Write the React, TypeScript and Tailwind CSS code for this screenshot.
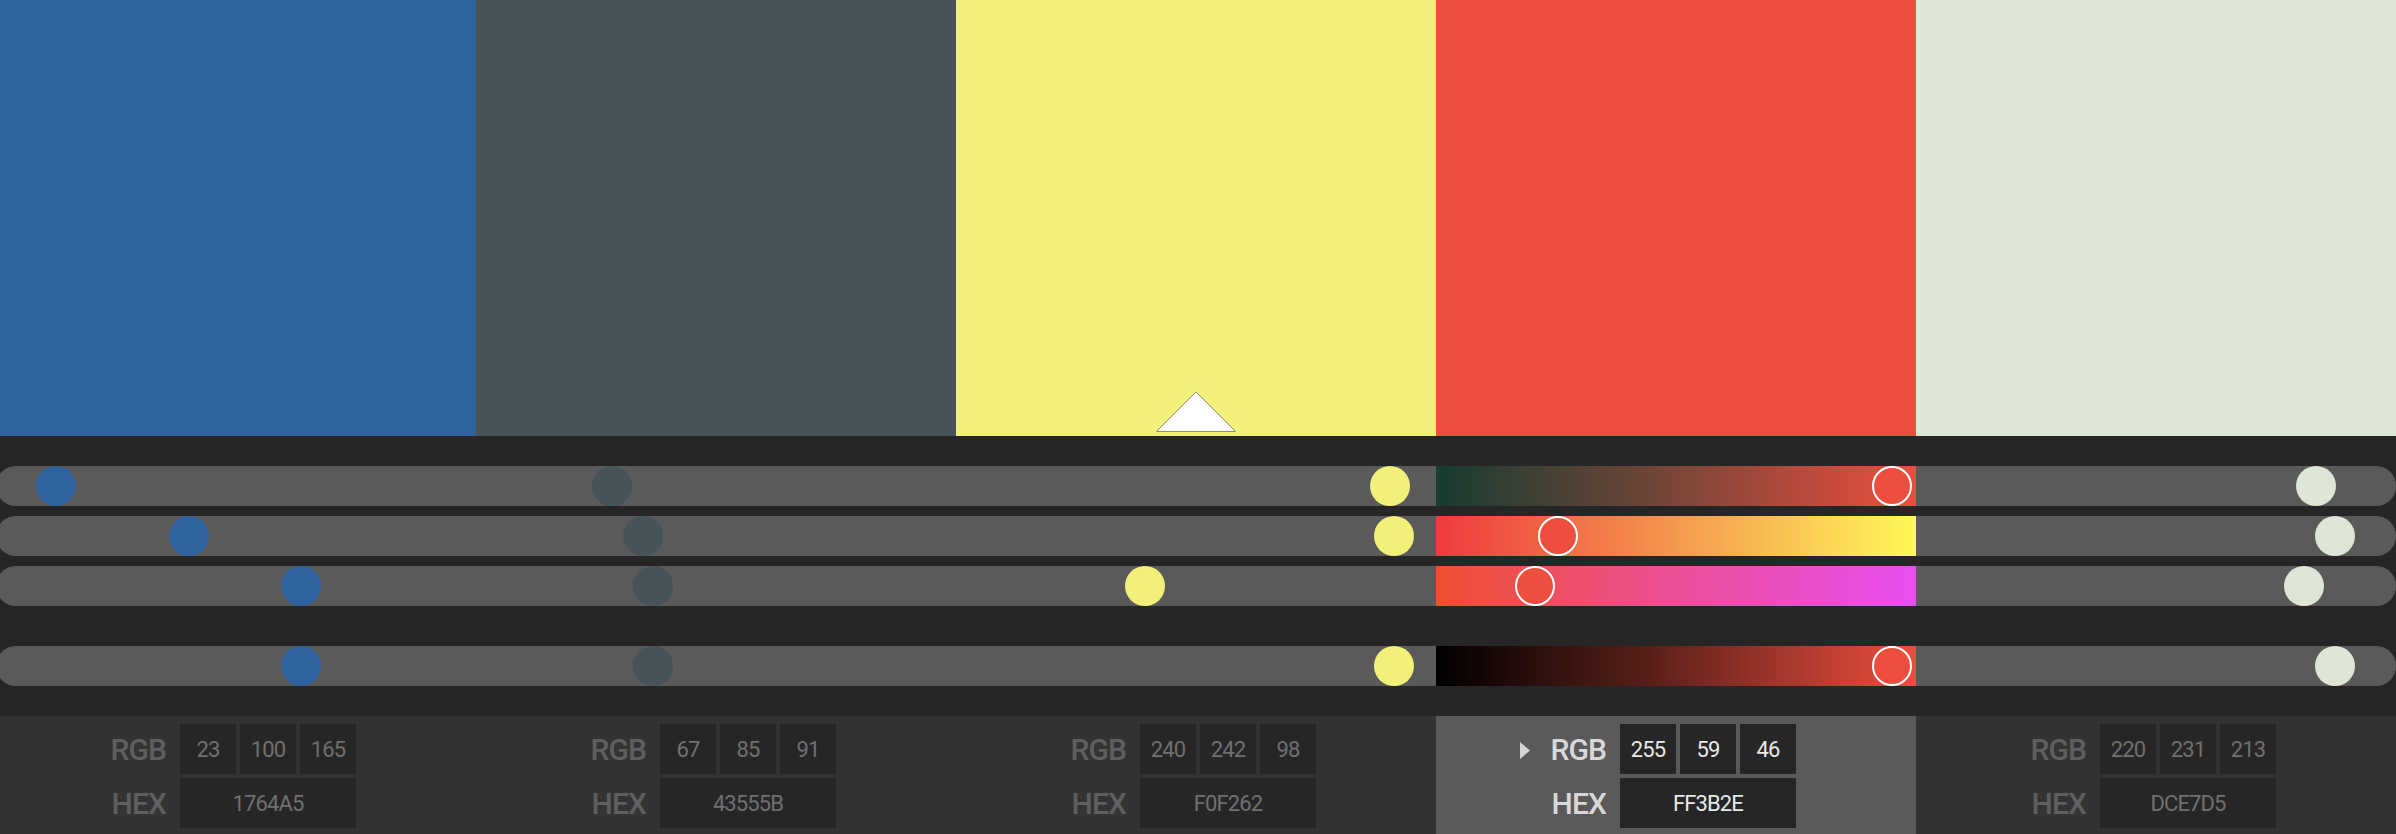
import React from "react";

type Swatch = {
  hex: string;
  rgb: [number, number, number];
  // colour as it shows on screen
  screen: string;
};

const swatches: Swatch[] = [
  { hex: "1764A5", rgb: [23, 100, 165], screen: "#2f63a0" },
  { hex: "43555B", rgb: [67, 85, 91], screen: "#465358" },
  { hex: "F0F262", rgb: [240, 242, 98], screen: "#f1f17a" },
  { hex: "FF3B2E", rgb: [255, 59, 46], screen: "#ee4e3e" },
  { hex: "DCE7D5", rgb: [220, 231, 213], screen: "#dee6d6" },
];

const ACTIVE = 3;
const BASE = 2;

// gradients for the active swatch, one per slider row (R, G, B, brightness)
const activeGradients = [
  "linear-gradient(to right, #173c31, #6e4538 45%, #ee4e3e)",
  "linear-gradient(to right, #ee3a3f, #f4984e 50%, #fff95a)",
  "linear-gradient(to right, #ee502e, #ec4f96 50%, #e84ff2)",
  "linear-gradient(to right, #000000, #5a201a 45%, #ee4e3e)",
];

function sliderValue(s: Swatch, row: number) {
  if (row < 3) return s.rgb[row];
  return Math.max(...s.rgb);
}

function handleLeft(v: number) {
  return Math.min(436, (v / 255) * 440);
}

function SliderRow({ row }: { row: number }) {
  return (
    <div className="grid h-10 grid-cols-5 rounded-full bg-[#5a5a5a]">
      {swatches.map((s, i) => {
        const active = i === ACTIVE;
        return (
          <div
            key={s.hex}
            className="relative h-10"
            style={active ? { backgroundImage: activeGradients[row] } : undefined}
          >
            <div
              className={
                active
                  ? "absolute top-0 h-10 w-10 rounded-full border-2 border-white"
                  : "absolute top-0 h-10 w-10 rounded-full"
              }
              style={{ left: handleLeft(sliderValue(s, row)), backgroundColor: s.screen }}
            />
          </div>
        );
      })}
    </div>
  );
}

function Box({ children, active, wide }: { children: React.ReactNode; active: boolean; wide?: boolean }) {
  return (
    <div
      className={
        (wide ? "w-[176px] " : "w-14 ") +
        "flex h-[50px] items-center justify-center bg-[#262626] text-[22px] tracking-[-0.04em] " +
        (active ? "text-[#e8e8e8]" : "text-[#707070]")
      }
    >
      {children}
    </div>
  );
}

function Values({ s, active }: { s: Swatch; active: boolean }) {
  const label = active ? "text-[#d8d8d8]" : "text-[#5f5f5f]";
  return (
    <div className={"flex flex-col gap-1 pt-2 " + (active ? "bg-[#5a5a5a]" : "bg-[#333333]")}>
      <div className="flex items-center">
        <div className="flex w-[184px] shrink-0 items-center justify-end gap-5 pr-[14px]">
          {active && (
            <svg width="10" height="17" viewBox="0 0 10 17" className="mt-[2px]">
              <polygon points="0,0 10,8.5 0,17" fill="#d4d4d4" />
            </svg>
          )}
          <span className={"text-[30px] font-medium tracking-[-0.03em] " + label}>RGB</span>
        </div>
        <div className="flex gap-1">
          {s.rgb.map((v, i) => (
            <Box key={i} active={active}>
              {v}
            </Box>
          ))}
        </div>
      </div>
      <div className="flex items-center">
        <div className="flex w-[184px] shrink-0 justify-end pr-[14px]">
          <span className={"text-[30px] font-medium tracking-[-0.03em] " + label}>HEX</span>
        </div>
        <Box active={active} wide>
          {s.hex}
        </Box>
      </div>
    </div>
  );
}

export default function App() {
  return (
    <div className="h-[834px] w-[2396px] overflow-hidden bg-[#262626] font-['Roboto','Open_Sans',sans-serif]">
      <div className="-ml-1 flex w-[2400px] flex-col">
        <div className="grid h-[436px] grid-cols-5">
          {swatches.map((s, i) => (
            <div key={s.hex} className="relative" style={{ backgroundColor: s.screen }}>
              {i === BASE && (
                <svg
                  width="80"
                  height="41"
                  viewBox="0 0 80 41"
                  className="absolute bottom-[4px] left-1/2 -translate-x-1/2"
                >
                  <polygon points="0.5,40.5 40,1 79.5,40.5" fill="#ffffff" stroke="#8d8d78" strokeWidth="1" />
                </svg>
              )}
            </div>
          ))}
        </div>

        <div className="flex flex-col pb-[30px] pt-[30px]">
          <div className="flex flex-col gap-[10px]">
            <SliderRow row={0} />
            <SliderRow row={1} />
            <SliderRow row={2} />
          </div>
          <div className="mt-10">
            <SliderRow row={3} />
          </div>
        </div>

        <div className="grid h-[118px] grid-cols-5">
          {swatches.map((s, i) => (
            <Values key={s.hex} s={s} active={i === ACTIVE} />
          ))}
        </div>
      </div>
    </div>
  );
}
